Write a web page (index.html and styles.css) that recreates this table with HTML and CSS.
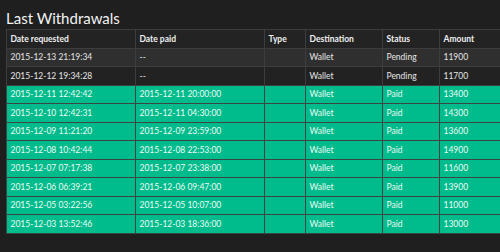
FILE: index.html
```html
<!DOCTYPE html>
<html>
<head>
<meta charset="utf-8">
<link rel="stylesheet" href="styles.css">
</head>
<body>
<div class="page">
  <h3 class="title">Last Withdrawals</h3>
  <div class="table-wrap">
    <table class="withdrawals">
      <colgroup>
        <col class="c-req"><col class="c-paid"><col class="c-type"><col class="c-dest"><col class="c-status"><col class="c-amount">
      </colgroup>
      <thead>
        <tr><th>Date requested</th><th>Date paid</th><th>Type</th><th>Destination</th><th>Status</th><th>Amount</th></tr>
      </thead>
      <tbody>
        <tr class="pending odd"><td>2015-12-13 21:19:34</td><td>--</td><td></td><td>Wallet</td><td>Pending</td><td>11900</td></tr>
        <tr class="pending"><td>2015-12-12 19:34:28</td><td>--</td><td></td><td>Wallet</td><td>Pending</td><td>11700</td></tr>
        <tr class="paid"><td>2015-12-11 12:42:42</td><td>2015-12-11 20:00:00</td><td></td><td>Wallet</td><td>Paid</td><td>13400</td></tr>
        <tr class="paid"><td>2015-12-10 12:42:31</td><td>2015-12-11 04:30:00</td><td></td><td>Wallet</td><td>Paid</td><td>14300</td></tr>
        <tr class="paid"><td>2015-12-09 11:21:20</td><td>2015-12-09 23:59:00</td><td></td><td>Wallet</td><td>Paid</td><td>13600</td></tr>
        <tr class="paid"><td>2015-12-08 10:42:44</td><td>2015-12-08 22:53:00</td><td></td><td>Wallet</td><td>Paid</td><td>14900</td></tr>
        <tr class="paid"><td>2015-12-07 07:17:38</td><td>2015-12-07 23:38:00</td><td></td><td>Wallet</td><td>Paid</td><td>11600</td></tr>
        <tr class="paid"><td>2015-12-06 06:39:21</td><td>2015-12-06 09:47:00</td><td></td><td>Wallet</td><td>Paid</td><td>13900</td></tr>
        <tr class="paid"><td>2015-12-05 03:22:56</td><td>2015-12-05 10:07:00</td><td></td><td>Wallet</td><td>Paid</td><td>11000</td></tr>
        <tr class="paid"><td>2015-12-03 13:52:46</td><td>2015-12-03 18:36:00</td><td></td><td>Wallet</td><td>Paid</td><td>13000</td></tr>
      </tbody>
    </table>
  </div>
</div>
</body>
</html>
```
FILE: styles.css
```css
html, body {
  margin: 0;
  padding: 0;
  background: #1f1f1f;
  overflow: hidden;
}
body {
  font-family: Lato, "Liberation Sans", sans-serif;
  color: #e6e6e6;
}
.page {
  padding: 0 0 0 6px;
}
.title {
  margin: 0;
  padding-top: 7px;
  font-size: 15px;
  line-height: 22px;
  font-weight: 400;
  color: #f2f2f2;
  height: 22px;
}
.table-wrap {
  width: 494px;
  overflow: hidden;
}
.withdrawals {
  border-collapse: collapse;
  width: 520px;
  table-layout: fixed;
  font-size: 8.5px;
  line-height: 12.5px;
}
.c-req { width: 129px; }
.c-paid { width: 129px; }
.c-type { width: 41px; }
.c-dest { width: 77px; }
.c-status { width: 57px; }
.c-amount { width: 87px; }
.withdrawals th,
.withdrawals td {
  border: 1px solid #3d3d3d;
  padding: 2.5px 3.5px;
  text-align: left;
  white-space: nowrap;
}
.withdrawals th {
  font-weight: 700;
  background: #232323;
  color: #f0f0f0;
}
.pending td {
  background: #222222;
}
.pending.odd td {
  background: #2f2f2f;
}
.paid td {
  background: #00bc8c;
  color: #eefaf5;
  border-color: #3b4642;
}
```
